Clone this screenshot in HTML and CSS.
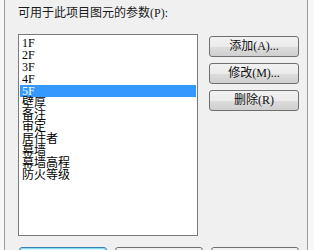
FILE: index.html
```html
<!DOCTYPE html>
<html>
<head>
<meta charset="utf-8">
<link rel="stylesheet" href="styles.css">
</head>
<body>
<div class="frame">
  <div class="label">可用于此项目图元的参数(P):</div>
  <div class="main">
    <div class="list">
      <div class="item">1F</div>
      <div class="item">2F</div>
      <div class="item">3F</div>
      <div class="item">4F</div>
      <div class="item selected">5F</div>
      <div class="item">壁厚</div>
      <div class="item">备注</div>
      <div class="item">审定</div>
      <div class="item">居住者</div>
      <div class="item">幕墙</div>
      <div class="item">幕墙高程</div>
      <div class="item">防火等级</div>
    </div>
    <div class="side">
      <div class="btn">添加(A)...</div>
      <div class="btn">修改(M)...</div>
      <div class="btn">删除(R)</div>
    </div>
  </div>
  <div class="footer">
    <div class="btn big default"></div>
    <div class="btn big"></div>
    <div class="btn big"></div>
  </div>
</div>
</body>
</html>
```

FILE: styles.css
```css
html, body {
  margin: 0;
  padding: 0;
}
body {
  width: 314px;
  height: 250px;
  overflow: hidden;
  background: #f7f7f7;
  font-family: "Liberation Serif", "Noto Sans CJK SC", serif;
  font-size: 12px;
  color: #1a1a1a;
}
.frame {
  box-sizing: border-box;
  margin-left: 4px;
  width: 304px;
  height: 250px;
  background: #f0f0f0;
  border-left: 1px solid #9a9a9a;
  border-right: 1px solid #9a9a9a;
  padding-left: 13px;
  overflow: hidden;
}
.label {
  height: 12px;
  line-height: 12px;
  padding-top: 7px;
  margin-bottom: 15px;
}
.main {
  display: flex;
  align-items: flex-start;
}
.list {
  box-sizing: border-box;
  width: 180px;
  height: 202px;
  background: #fff;
  border: 1px solid #7a7a7a;
  padding: 2px 1px;
  color: #000;
}
.item {
  height: 12px;
  line-height: 12px;
  padding-left: 2px;
}
.item.selected {
  background: #3399ff;
  color: #fff;
}
.side {
  display: flex;
  flex-direction: column;
  gap: 6px;
  margin-left: 11px;
  margin-top: 2px;
}
.btn {
  box-sizing: border-box;
  width: 90px;
  height: 21px;
  line-height: 19px;
  text-align: center;
  border: 1px solid #707070;
  border-radius: 3px;
  background: linear-gradient(#f2f2f2 0%, #ebebeb 50%, #dddddd 51%, #cfcfcf 100%);
  color: #111;
}
.footer {
  display: flex;
  gap: 8px;
  margin-top: 11px;
  margin-left: 1px;
}
.btn.big {
  width: 88px;
  height: 23px;
  line-height: 21px;
}
.btn.default {
  border-color: #3c7fb1;
  background: linear-gradient(#eaf6fd 0%, #d9f0fc 50%, #bee6fd 51%, #a7d9f5 100%);
  box-shadow: inset 0 0 0 1px #7fdcf5;
}
```
